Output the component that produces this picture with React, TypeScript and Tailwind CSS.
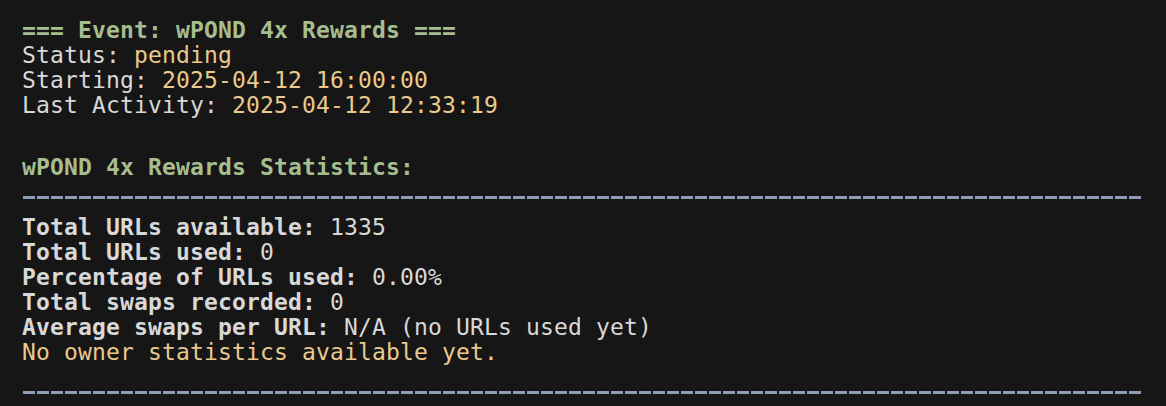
import React from "react";

const stats = [
  { label: "Total URLs available:", value: "1335" },
  { label: "Total URLs used:", value: "0" },
  { label: "Percentage of URLs used:", value: "0.00%" },
  { label: "Total swaps recorded:", value: "0" },
  { label: "Average swaps per URL:", value: "N/A (no URLs used yet)" },
];

function Rule({ className = "" }: { className?: string }) {
  return (
    <div className={`flex gap-[2px] ${className}`}>
      {Array.from({ length: 80 }).map((_, i) => (
        <span key={i} className="block w-[12px] h-[3px] bg-[#8d9db5]" />
      ))}
    </div>
  );
}

export default function App() {
  return (
    <div className="w-[1166px] h-[406px] bg-[#161616] pl-[22px] pt-[18px] font-['DejaVu_Sans_Mono',monospace] text-[23px] leading-[25px] tracking-[0.15px] text-[#d8d8d8] whitespace-pre">
      <div className="font-bold text-[#a6bd8f]">=== Event: wPOND 4x Rewards ===</div>
      <div>
        Status: <span className="text-[#e9c98c]">pending</span>
      </div>
      <div>
        Starting: <span className="text-[#e9c98c]">2025-04-12 16:00:00</span>
      </div>
      <div>
        Last Activity: <span className="text-[#e9c98c]">2025-04-12 12:33:19</span>
      </div>

      <div className="mt-[37px] font-bold text-[#a6bd8f]">wPOND 4x Rewards Statistics:</div>
      <Rule className="mt-[16px] ml-[1px]" />

      <div className="mt-[16px]">
        {stats.map((s) => (
          <div key={s.label}>
            <span className="font-bold">{s.label}</span> {s.value}
          </div>
        ))}
        <div className="text-[#e9c98c]">No owner statistics available yet.</div>
      </div>
      <Rule className="mt-[26px] ml-[1px]" />
    </div>
  );
}
